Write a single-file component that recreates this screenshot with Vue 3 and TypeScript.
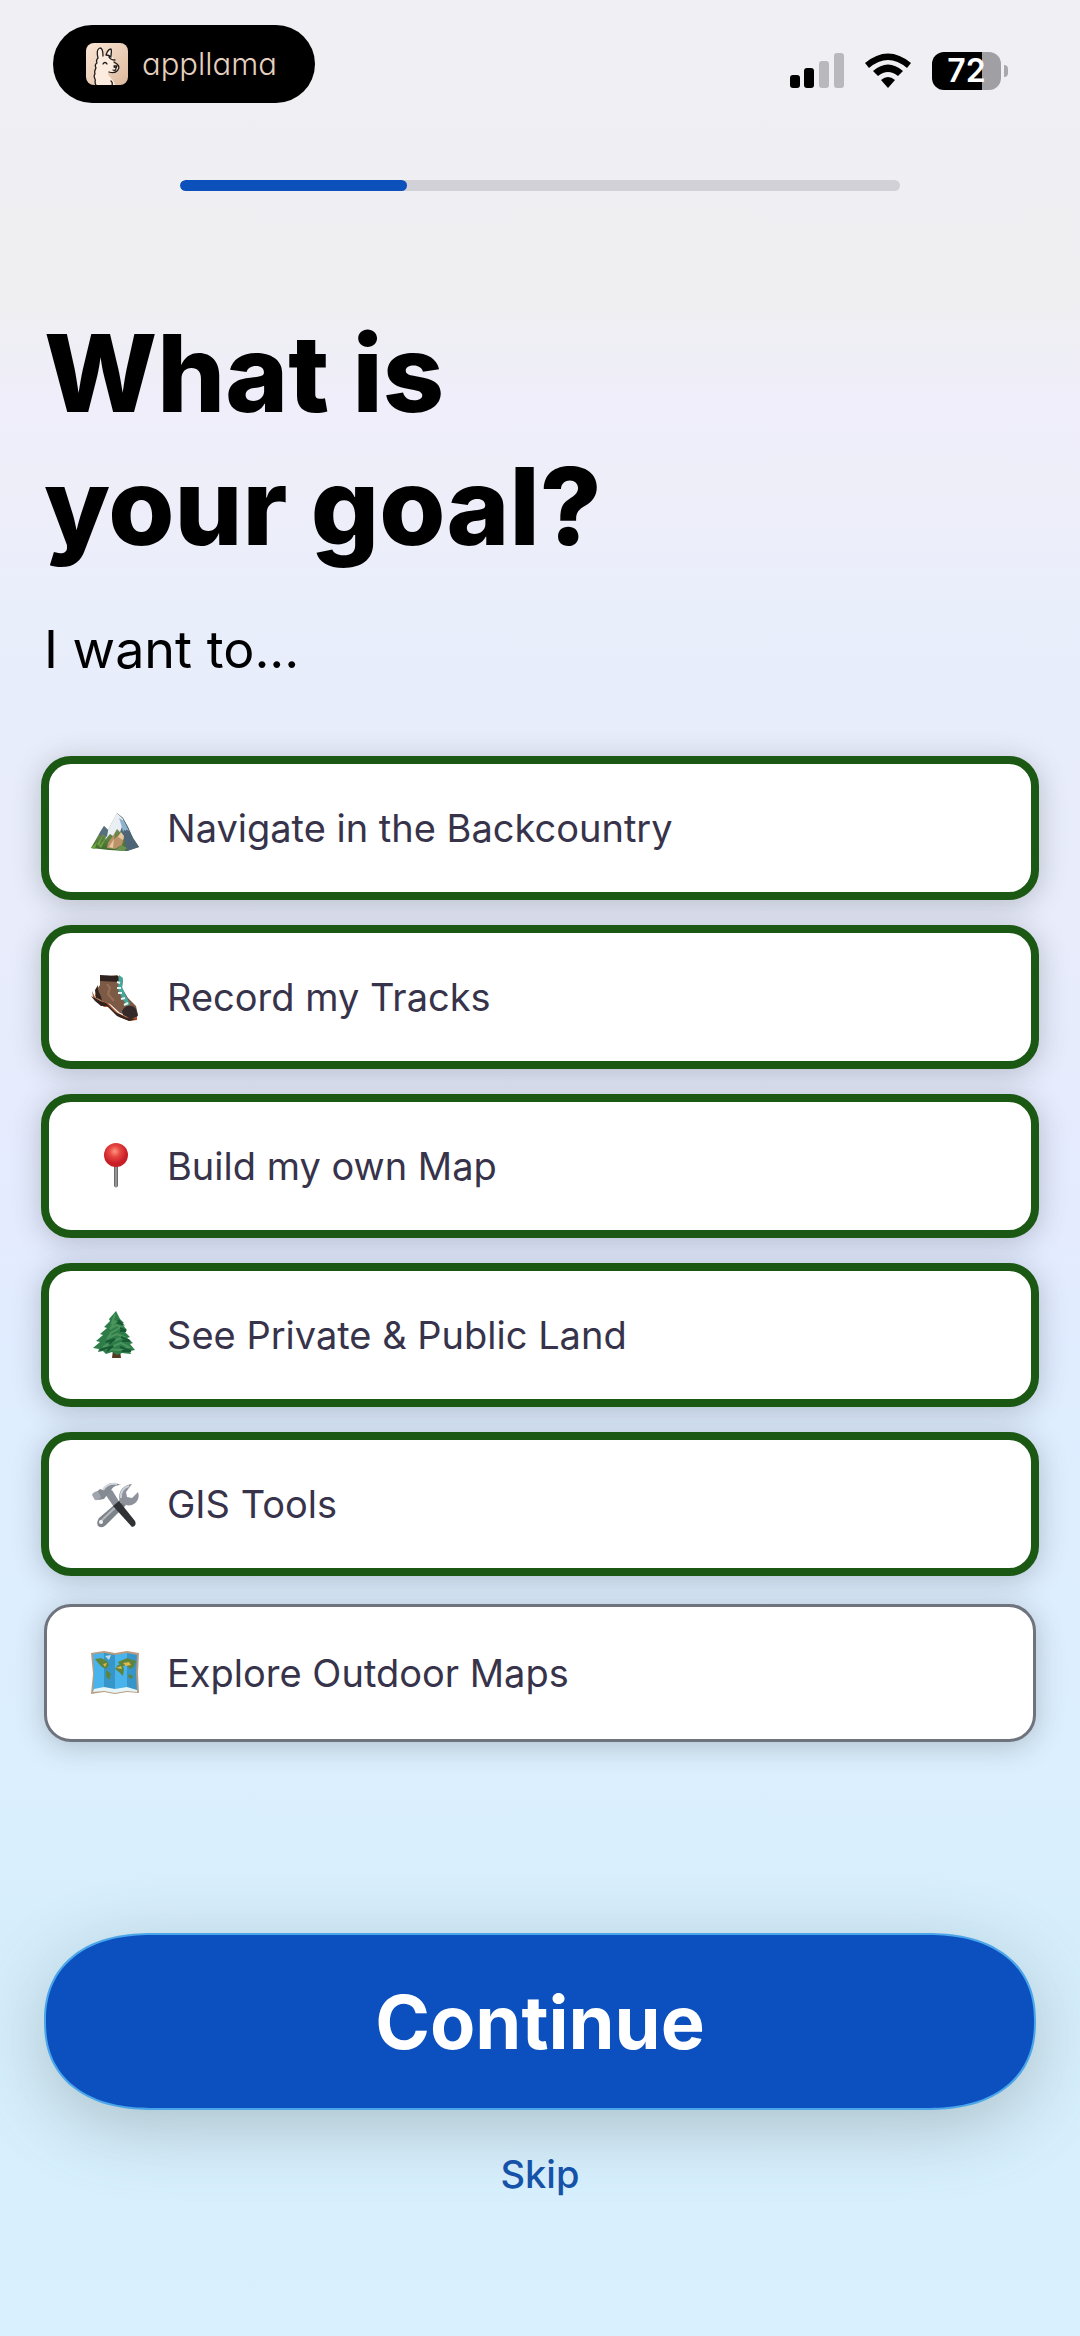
<script setup lang="ts">
import { ref } from 'vue'

interface Goal {
  id: string
  label: string
}

const goals: Goal[] = [
  { id: 'navigate', label: 'Navigate in the Backcountry' },
  { id: 'record', label: 'Record my Tracks' },
  { id: 'build', label: 'Build my own Map' },
  { id: 'land', label: 'See Private & Public Land' },
  { id: 'gis', label: 'GIS Tools' },
  { id: 'explore', label: 'Explore Outdoor Maps' },
]

const selected = ref<string[]>(['navigate', 'record', 'build', 'land', 'gis'])
</script>

<template>
  <main class="screen">
    <header class="status">
      <div class="brand">
        <svg class="brand-icon" viewBox="0 0 42 42" aria-hidden="true">
          <defs>
            <linearGradient id="tile" x1="0" y1="0" x2="1" y2="1">
              <stop offset="0" stop-color="#fbe6d6" />
              <stop offset="1" stop-color="#dcb99c" />
            </linearGradient>
          </defs>
          <rect width="42" height="42" rx="8" fill="url(#tile)" />
          <path d="M10 42c-2-3 0-5-1-7 0-2-1-4 0-6 0-2 0-4 1-5 0-2-1-3 1-5-1-2 0-3 1-4-1-4-1-9 2-10 3 0 3 5 3 8l3-1c1-3 3-6 5-6 1 2 0 5 0 7 2 1 3 2 3 4l-1 3 4 3c2 2 2 4 0 6-2 1-3 2-5 1l-4-1c-1 5 6 6 7 13z" fill="#fcecdf" />
          <g fill="none" stroke="#211c1b" stroke-width="1.3" stroke-linecap="round" stroke-linejoin="round">
            <path d="M10 42c-2-3 0-4-1-6-1-2-1-4 0-5-1-3 0-4 1-6-1-2-1-4 1-5-1-2 0-4 1-5-1-4-1-9 2-10 3 0 3 5 3 8M20 12c1-3 3-6 5-6 1 2 0 5 0 7M20 12c2 0 4 1 5 2M23 14c1 2 3 3 6 3M28 19l3 2c3 2 2 5 0 7-2 2-5 2-8 1M17 21c1-2 3-2 4 0M26 42c1-2 0-3-1-4M28 23h3l-1 2-2-1M27 27c2 1 3 0 3-2" />
          </g>
        </svg>
        <span class="brand-name">appllama</span>
      </div>
      <div class="indicators">
        <svg class="signal" viewBox="0 0 54 36" aria-hidden="true">
          <rect x="0" y="22" width="10" height="13" rx="3" />
          <rect x="14" y="15" width="10" height="20" rx="3" />
          <rect x="29" y="8" width="10" height="27" rx="3" fill="#b9b8bd" />
          <rect x="44" y="0" width="10" height="35" rx="3" fill="#b9b8bd" />
        </svg>
        <svg class="wifi" viewBox="0 0 46 36" aria-hidden="true">
          <path d="M0 10Q23-9 46 10l-4 5Q23-1 4 15z" />
          <path d="M8 18q15-13 30 0l-5 5q-10-8-20 0z" />
          <path d="M16 27q7-6 14 0l-7 8z" />
        </svg>
        <div class="battery">
          <span class="battery-body">72</span>
          <span class="battery-cap"></span>
        </div>
      </div>
    </header>

    <div class="progress" role="progressbar" aria-label="Setup progress" aria-valuenow="32" aria-valuemin="0" aria-valuemax="100">
      <div class="progress-fill"></div>
    </div>

    <h1>What is<br />your goal?</h1>
    <p class="lead">I want to...</p>

    <div class="goals" role="group" aria-label="I want to">
      <label v-for="goal in goals" :key="goal.id" class="goal" :class="{ on: selected.includes(goal.id) }">
        <input v-model="selected" type="checkbox" :value="goal.id" />
        <svg class="emoji" viewBox="0 0 48 48" aria-hidden="true">
          <g v-if="goal.id === 'navigate'">
            <defs>
              <linearGradient id="meadow" x1="0" y1="0" x2="0" y2="1">
                <stop offset="0" stop-color="#9aa0a0" />
                <stop offset=".5" stop-color="#6f8a52" />
                <stop offset="1" stop-color="#3c6b2a" />
              </linearGradient>
            </defs>
            <path d="M0 44l8-14 5-8 4 4 9-17 6 5 5 9 5 11 6 9-12 4-18-1z" fill="url(#meadow)" />
            <path d="M26 9l6 5 5 9 5 11 6 9-12 4-3-12-4-9z" fill="#4d6577" />
            <path d="M26 9l-9 17-3 10 5-6 3 2 4-7 3 3 2-5 4 4-3-12z" fill="#e9eff3" />
            <path d="M28 14l5 3 5 10-4-2-2 3-2-8z" fill="#8fb2cf" />
            <path d="M13 22l-5 8 1 3 3-3 4 3 1-7z" fill="#566e80" />
            <path d="M17 39l7-10-1 6 7-6 3 4-2 8-7 4-8-1z" fill="#bd9268" />
            <path d="M27 33l3-5 3 4-1 4zM18 43l5-8-1 9z" fill="#e5c8a0" />
            <path d="M6 40l6-9-4 11 7-8-5 10zM0 44l6-6-2 7z" fill="#6da43c" />
            <path d="M24 46l7-5 5 3-3 3z" fill="#6c9150" />
          </g>
          <g v-else-if="goal.id === 'record'">
            <path d="M9 5l17-3 6 5-1 8 6 10 8 8 2 9-6 2-12-4-10-9-9-3-6-5 2-7 3-4z" fill="#7d5a45" />
            <path d="M9 2l18 1 1 6-19-1z" fill="#30221e" />
            <path d="M7 12c-1 7 3 9 4 15l-6-2-1-8z" fill="#33231d" />
            <path d="M1 18l3 6 6 4 7 2 10 10 9 4 10-1v4l-7 1-11-4-10-10-5 0-7-6-4-4z" fill="#b0562c" />
            <path d="M0 23l4 5 6 5 6 0 10 10 12 5 7-2-9-1-12-6-9-9-6-2z" fill="#32211d" />
            <path d="M31 38c3-6 10-7 14-2l2 7-7 3-8-4z" fill="#35292a" />
            <path d="M28 2l4 3-1 9 4 9 4 8-3 2-5-8-4-9z" fill="#43a79c" />
            <path d="M26 9l3 1M26 15l4 0M27 20l4 0M30 26l4-1M33 32l4-2" stroke="#e4f7f1" stroke-width="2" />
            <path d="M16 11l3 4-2 6 6 7" fill="none" stroke="#967058" stroke-width="2" />
          </g>
          <g v-else-if="goal.id === 'build'">
            <defs>
              <radialGradient id="pinhead" cx=".45" cy=".35">
                <stop offset="0" stop-color="#ff9582" />
                <stop offset=".45" stop-color="#e74842" />
                <stop offset="1" stop-color="#c71e27" />
              </radialGradient>
              <linearGradient id="needle">
                <stop offset="0" stop-color="#555" />
                <stop offset=".5" stop-color="#aaa" />
                <stop offset="1" stop-color="#555" />
              </linearGradient>
            </defs>
            <path d="M23 22h4v22q-2 3-4 0z" fill="url(#needle)" />
            <circle cx="25" cy="13" r="12" fill="url(#pinhead)" />
          </g>
          <g v-else-if="goal.id === 'land'">
            <path d="M22 39h7l1 8h-9z" fill="#563923" />
            <path d="M25 0l4 8 4 4-2 1 5 6-3 1 6 6-3 1 6 5-3 1 5 6-5 1 1 3-9-1-5 2-5-3-6 2-3-3-5 1 1-3-6-1 7-6-4-1 7-6-3-1 7-6-3-1 6-6-1-2z" fill="#2e7d49" />
            <path d="M24 3l-3 9 4-2-6 8 7-4 4 2-10 6-3 5 9-4 7 3-11 4-10 6 11-1 7-3 8 4-10 3-14-1" fill="none" stroke="#4b955d" stroke-width="2" />
            <path d="M27 9l4 4-5-1M29 17l6 3-6 0M30 26l9 4-8 0M15 31l9-3-6 5M9 39l13-4-6 5M29 36l11 4-9 0" fill="none" stroke="#185a34" stroke-width="2" />
          </g>
          <g v-else-if="goal.id === 'gis'">
            <path d="M29 20l6 5-20 20q-4 4-8 1-2-4 1-8z" fill="#7f848b" />
            <path d="M30 22l-21 20" stroke="#b4b8be" stroke-width="2" />
            <path d="M29 22c-3-9 2-17 12-18l-6 8 1 5 5 1 6-6c3 9-5 15-12 13z" fill="#8e939b" />
            <path d="M30 18c-1-6 3-11 8-12" fill="none" stroke="#cbd0d5" stroke-width="2" />
            <path d="M14 14l7-4 8 13-6 4z" fill="#8a8f97" />
            <path d="M22 26l6-5 16 20q2 5-3 6z" fill="#303235" />
            <path d="M3 14l6-5 3 1c3-7 10-9 18-5-5 0-9 2-10 6l-4 4-3 4-6 1z" fill="#858b93" />
            <path d="M12 10c3-5 7-7 14-6" fill="none" stroke="#d1d5db" stroke-width="2" />
            <rect x="2" y="12" width="7" height="8" rx="2" transform="rotate(-30 5 16)" fill="#a1a6ae" />
            <circle cx="10" cy="42" r="2" fill="#f4f4f4" />
          </g>
          <g v-else>
            <path d="M0 4l13-2 11 2 12-2 12 2-1 20 1 20-12-1-12 2-11-2-13 2 2-20z" fill="#b99c80" />
            <path d="M2 5l11-1 11 2 12-2 10 2-1 18 1 18-10-1-12 2-11-2-11 2 1-19z" fill="#49b4ec" />
            <path d="M13 4l11 2v37l-11-2zM36 4l10 2-1 18 1 18-10-1z" fill="#267eae" opacity=".55" />
            <path d="M3 40l10-2 11 2 12-2 10 3v2l-10-1-12 2-11-2-11 1z" fill="#e5f4f7" />
            <path d="M4 10l6-1 6 3 2 4-3 4-4-2-3-3zM15 21l5 4-2 6-3-4zM24 20l3-4 4-1 2 5-1 7-4-4zM27 13l9-4 9 3-2 6-4 2-4-4-5 2zM38 25l4 2-1 3-4-2z" fill="#5f843c" />
            <path d="M12 15l4-1-2 4M25 19l5-2 1 3zM32 14l6-1 2 3-5 1" fill="#dfb850" />
            <path d="M14 7l6-1-2 5z" fill="#bddde7" />
          </g>
        </svg>
        <span>{{ goal.label }}</span>
      </label>
    </div>

    <button type="button" class="continue">Continue</button>
    <button type="button" class="skip">Skip</button>
  </main>
</template>

<style>
body {
  margin: 0;
}
</style>

<style scoped>
.screen {
  box-sizing: border-box;
  min-height: 100vh;
  padding: 25px 44px 100px;
  display: flex;
  flex-direction: column;
  font-family: Inter, "Liberation Sans", sans-serif;
  color: #000;
  background: linear-gradient(180deg, #f0eff4 0%, #efeff2 13%, #efeefa 17%, #eeeef9 21%, #e9eefb 26%, #e8ecfb 40%, #e4ebff 53%, #dfedff 59%, #dceffe 75%, #d6eefc 83%, #d9f1fe 100%);
}

.status {
  display: flex;
  align-items: center;
  justify-content: space-between;
  padding: 0 28px 0 9px;
}

.brand {
  box-sizing: border-box;
  width: 262px;
  height: 78px;
  padding: 0 33px;
  display: flex;
  align-items: center;
  gap: 14px;
  border-radius: 39px;
  background: #000;
}

.brand-icon {
  flex: none;
  width: 42px;
  height: 42px;
}

.brand-name {
  font-size: 31px;
  line-height: 40px;
  font-weight: 300;
  font-feature-settings: "cv11";
  color: #e6d0bf;
}

.indicators {
  display: flex;
  align-items: center;
  gap: 21px;
  padding-top: 14px;
}

.signal {
  width: 54px;
  height: 36px;
}

.wifi {
  width: 46px;
  height: 36px;
}

.battery {
  display: flex;
  align-items: center;
  gap: 3px;
}

.battery-body {
  width: 69px;
  height: 38px;
  border-radius: 12px;
  background: linear-gradient(90deg, #000 50px, #a09fa3 50px);
  color: #fff;
  font-size: 32px;
  line-height: 38px;
  font-weight: 600;
  text-align: center;
}

.battery-cap {
  width: 4px;
  height: 12px;
  border-radius: 0 6px 6px 0;
  background: #a9a8ac;
}

.progress {
  width: 720px;
  max-width: 100%;
  height: 11px;
  margin: 77px auto 0;
  border-radius: 6px;
  background: #d2d1d7;
  overflow: hidden;
}

.progress-fill {
  width: 227px;
  height: 100%;
  border-radius: 6px;
  background: #0c50bc;
}

h1 {
  margin: 116px 0 0;
  font-size: 107px;
  line-height: 133px;
  font-weight: 800;
}

.lead {
  margin: 45px 0 0;
  font-size: 52px;
  line-height: 64px;
}

.goals {
  display: flex;
  flex-direction: column;
  gap: 31px;
  margin-top: 77px;
}

.goal {
  position: relative;
  box-sizing: border-box;
  height: 138px;
  padding: 0 44px;
  display: flex;
  align-items: center;
  gap: 28px;
  border: 3px solid #6e737d;
  border-radius: 27px;
  background: #fff;
  box-shadow: 0 4px 28px rgba(70, 75, 80, 0.3);
  color: #37334a;
  font-size: 38px;
  line-height: 44px;
}

.goal.on {
  height: 144px;
  margin: -3px;
  border: 8px solid #1b5814;
  border-radius: 30px;
  padding: 0 42px;
}

.goal input {
  position: absolute;
  opacity: 0;
}

.emoji {
  flex: none;
  width: 48px;
  height: 48px;
}

.continue {
  height: 177px;
  margin-top: 191px;
  border: 2px solid #4aa5ea;
  border-radius: 108px / 88px;
  corner-shape: superellipse(1.2);
  background: #0b50be;
  box-shadow: 0 18px 70px rgba(80, 100, 100, 0.32);
  color: #fff;
  font: 700 74px/90px Inter, "Liberation Sans", sans-serif;
}

.skip {
  align-self: center;
  margin-top: 32px;
  padding: 10px 20px;
  border: 0;
  background: none;
  color: #1552a8;
  font: 500 38px/44px Inter, "Liberation Sans", sans-serif;
}
</style>
